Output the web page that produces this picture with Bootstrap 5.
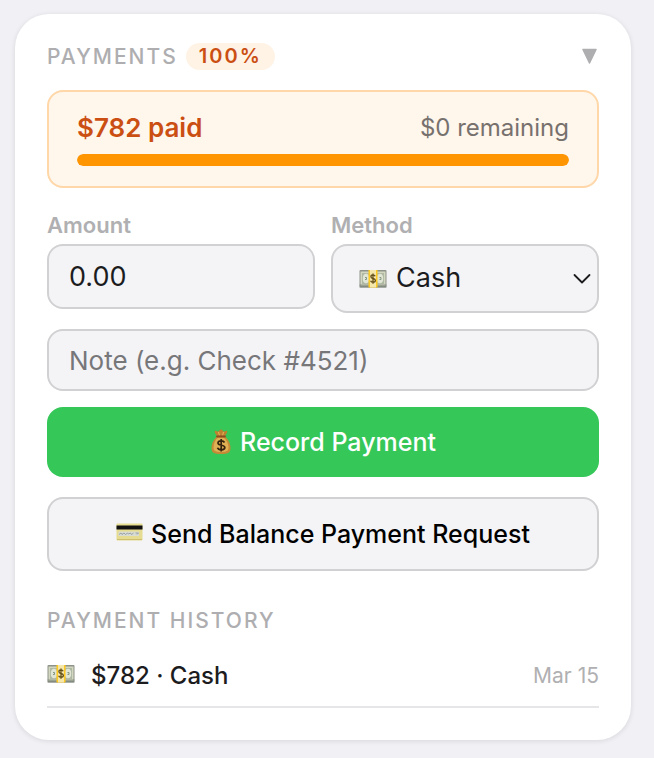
<!DOCTYPE html>
<html lang="en">
<head>
<meta charset="utf-8">
<meta name="viewport" content="width=device-width, initial-scale=1">
<title>Payments</title>
<link href="https://cdn.jsdelivr.net/npm/bootstrap@5.3.0/dist/css/bootstrap.min.css" rel="stylesheet">
<style>
  body { background: #f1f0f5; font-family: Inter, "Liberation Sans", sans-serif; color: #1c1c1e; }
  .page-wrap { padding: 14px 23px 16px 15px; }
  .pay-card { border: 0; border-radius: 34px; padding: 29px 32px 32px; box-shadow: 0 1px 4px 1px rgba(0,0,0,.08); }
  .section-title { font-size: 21px; line-height: 27px; font-weight: 500; letter-spacing: 2px; color: #aeaeb0; margin: 0; }
  .pct-pill { background: #fff3e6; color: #cb4f12; font-size: 20px; line-height: 27px; font-weight: 600; letter-spacing: 2px; padding: 0 13px; border-radius: 14px; }
  .toggle-btn { line-height: 0; }
  .summary-box { background: #fff6ec; border: 2px solid #ffd7a8; border-radius: 16px; padding: 20px 28px; margin-top: 20px; }
  .summary-line { line-height: 32px; margin-bottom: 10px; }
  .paid-total { font-size: 26px; font-weight: 600; color: #cb4f12; }
  .left-total { font-size: 24px; color: #77716e; }
  .pay-progress { height: 12px; border-radius: 6px; background: #f3e4d2; }
  .pay-progress .progress-bar { background: #ff9500; border-radius: 6px; }
  .fields { margin-top: 23px; }
  .field-label { font-size: 22px; line-height: 28px; font-weight: 600; color: #b0b0b2; margin-bottom: 5px; }
  .pay-field, .pay-field:focus { background-color: #f4f4f7; border: 2px solid #d1d1d3; border-radius: 16px; color: #1c1c1e; padding: 0 20px; font-size: 27px; }
  .amount-field { height: 65px; }
  .method-wrap > * { grid-area: 1 / 1; }
  .method-wrap svg { margin-left: 28px; pointer-events: none; z-index: 1; }
  .method-field, .method-field:focus { height: 69px; padding: 0 36px 0 63px; background-position: right 5px center; background-size: 20px 20px;
    background-image: url("data:image/svg+xml,%3Csvg xmlns='http://www.w3.org/2000/svg' viewBox='0 0 20 20'%3E%3Cpath d='M2.500 6l7.500 7.500L17.500 6' fill='none' stroke='%231c1c1e' stroke-width='1.800' stroke-linecap='round' stroke-linejoin='round'/%3E%3C/svg%3E"); }
  .note-field, .note-field:focus { height: 62px; font-size: 26px; }
  .note-field::placeholder { color: #77777a; opacity: 1; }
  .action-btn { border-radius: 16px; font-size: 25px; line-height: 32px; font-weight: 500; }
  .record-btn, .record-btn:hover { background: #36c759; color: #fff; border: 0; min-height: 70px; }
  .request-btn, .request-btn:hover { background: #f4f4f7; color: #000; border: 2px solid #d1d1d3; min-height: 74px; margin-top: 20px; }
  .history-title { margin-top: 36px; }
  .history-row { padding: 26px 0 14px; border-bottom: 2px solid #e6e6e8; line-height: 32px; }
  .entry-text { font-size: 24px; font-weight: 500; }
  .entry-date { font-size: 21px; color: #b0b0b2; }
</style>
</head>
<body>
<svg class="d-none" aria-hidden="true">
  <symbol id="bills" viewBox="0 0 28 20">
    <rect x=".5" y="1" width="27" height="17.500" rx="1" fill="#8d9388"/>
    <rect x="1.500" y="2.500" width="25" height="14" fill="#d3d7c0"/>
    <rect x="3" y="4" width="22" height="11" fill="#aeb8a2"/>
    <ellipse cx="7" cy="9.500" rx="3.200" ry="4.700" fill="#e0e5d5"/>
    <ellipse cx="21" cy="9.500" rx="3.200" ry="4.700" fill="#e0e5d5"/>
    <path d="M6 8.500h1.500v2H6M20.500 8.500H22v2h-1.500" stroke="#849780" fill="none"/>
    <path d="M.5 16h27M.5 18h27" stroke="#777f73" stroke-width=".7"/>
    <path d="M9.500 1h9v17.500h-9z" fill="#ffc91f"/>
    <path d="M11 1h6v17.500h-6z" fill="#f5e6aa"/>
    <path d="M16.200 7.300c-.5-1-1.300-1.300-2.300-1.300-1.200 0-2 .7-2 1.700 0 2.500 4.500 1.100 4.500 3.700 0 1.100-1 1.800-2.400 1.800-1.100 0-2-.5-2.400-1.500M14 4.500v10.300" stroke="#66521c" stroke-width="1.300" fill="none"/>
  </symbol>
</svg>

<main class="page-wrap">
  <section class="card pay-card">
    <header class="d-flex align-items-center">
      <h2 class="section-title">PAYMENTS</h2>
      <span class="pct-pill ms-2">100%</span>
      <button type="button" class="btn p-0 border-0 ms-auto toggle-btn" aria-label="Collapse payments">
        <svg width="18" height="17" viewBox="0 0 18 17"><path d="M2 1.500h13L8.500 15z" fill="#aeaeb0" stroke="#aeaeb0" stroke-width="1.500" stroke-linejoin="round"/></svg>
      </button>
    </header>

    <div class="summary-box">
      <div class="d-flex justify-content-between align-items-center summary-line">
        <span class="paid-total">$782 paid</span>
        <span class="left-total">$0 remaining</span>
      </div>
      <div class="progress pay-progress" role="progressbar" aria-label="Paid" aria-valuenow="100" aria-valuemin="0" aria-valuemax="100">
        <div class="progress-bar" style="width: 100%"></div>
      </div>
    </div>

    <form>
      <div class="row gx-3 fields mb-3">
        <div class="col-6">
          <label class="d-block field-label" for="amount">Amount</label>
          <input class="form-control pay-field amount-field" id="amount" type="text" inputmode="decimal" value="0.00">
        </div>
        <div class="col-6">
          <label class="d-block field-label" for="method">Method</label>
          <div class="d-grid align-items-center method-wrap">
            <select class="form-select pay-field method-field" id="method"><option>Cash</option></select>
            <svg class="ms-4 ps-1" width="34" height="20" aria-hidden="true"><use href="#bills" width="28" height="20"/></svg>
          </div>
        </div>
      </div>
      <input class="form-control pay-field note-field mb-3" type="text" aria-label="Note" placeholder="Note (e.g. Check #4521)">
      <button type="button" class="btn w-100 d-flex align-items-center justify-content-center gap-2 action-btn record-btn">
        <svg width="22" height="26" viewBox="0 0 22 26" aria-hidden="true">
          <path d="M7 7C5.500 4.500 4 3 5 2s2 .5 3 .5S9.500.5 11 .5s2 2 3 2 2-1.500 3-.5-.5 2.500-2 5z" fill="#bd8130"/>
          <path d="M7.500 7h7c2.500 2 6 6.500 6 12 0 4.500-2 6-9.500 6s-9.500-1.500-9.500-6c0-5.500 3.500-10 6-12z" fill="#c58a37"/>
          <path d="M8 8.500h5.500c2.500 2 5 6 5 10 0 3.500-2 4.500-7.500 4.500s-7.500-1-7.500-4.500c0-4 2-8 4.500-10z" fill="#dfb054"/>
          <path d="M8.500 3l1 3.500M13.500 3l-1 3.500" stroke="#e7b75c" fill="none"/>
          <path d="M7 7.500h8" stroke="#8c4d20" stroke-width="1.800" stroke-linecap="round"/>
          <path d="M14.500 13.500c-.6-1.200-1.800-1.700-3.300-1.700-1.900 0-3.200.8-3.200 2.200 0 3.200 6.800 1.300 6.800 4.500 0 1.500-1.500 2.300-3.500 2.300-1.800 0-3.300-.7-3.800-2M11.200 10v12.500" stroke="#33220d" stroke-width="1.700" fill="none"/>
        </svg>
        <span>Record Payment</span>
      </button>
      <button type="button" class="btn w-100 d-flex align-items-center justify-content-center action-btn request-btn">
        <svg class="me-2 mb-1" width="27" height="18" viewBox="0 0 27 18" aria-hidden="true">
          <rect x=".5" y=".5" width="26" height="17" rx="1" fill="#e5dc91"/>
          <path d="M.5 2.500h26v4H.5z" fill="#111"/>
          <path d="M2.500 8.500h20.500v4.500H2.500z" fill="#d9dcd2"/>
          <path d="M3 11.500l2-1.500 1 1.500 2-1.500 1.500 1.500 2-1.500 1 1 2-1 1 1.500 2-1.500M19.500 10h3l-1.500 1.500" stroke="#8b929a" stroke-width=".8" fill="none"/>
          <path d="M1 16.500h25" stroke="#cdbf6d"/>
        </svg>
        <span>Send Balance Payment Request</span>
      </button>
    </form>

    <h3 class="section-title history-title">PAYMENT HISTORY</h3>
    <div class="d-flex align-items-center history-row">
      <svg class="me-3 mb-1" width="28" height="20" aria-hidden="true"><use href="#bills"/></svg>
      <span class="entry-text">$782 · Cash</span>
      <time class="ms-auto entry-date">Mar 15</time>
    </div>
  </section>
</main>
<script src="https://cdn.jsdelivr.net/npm/bootstrap@5.3.0/dist/js/bootstrap.bundle.min.js"></script>
</body>
</html>
